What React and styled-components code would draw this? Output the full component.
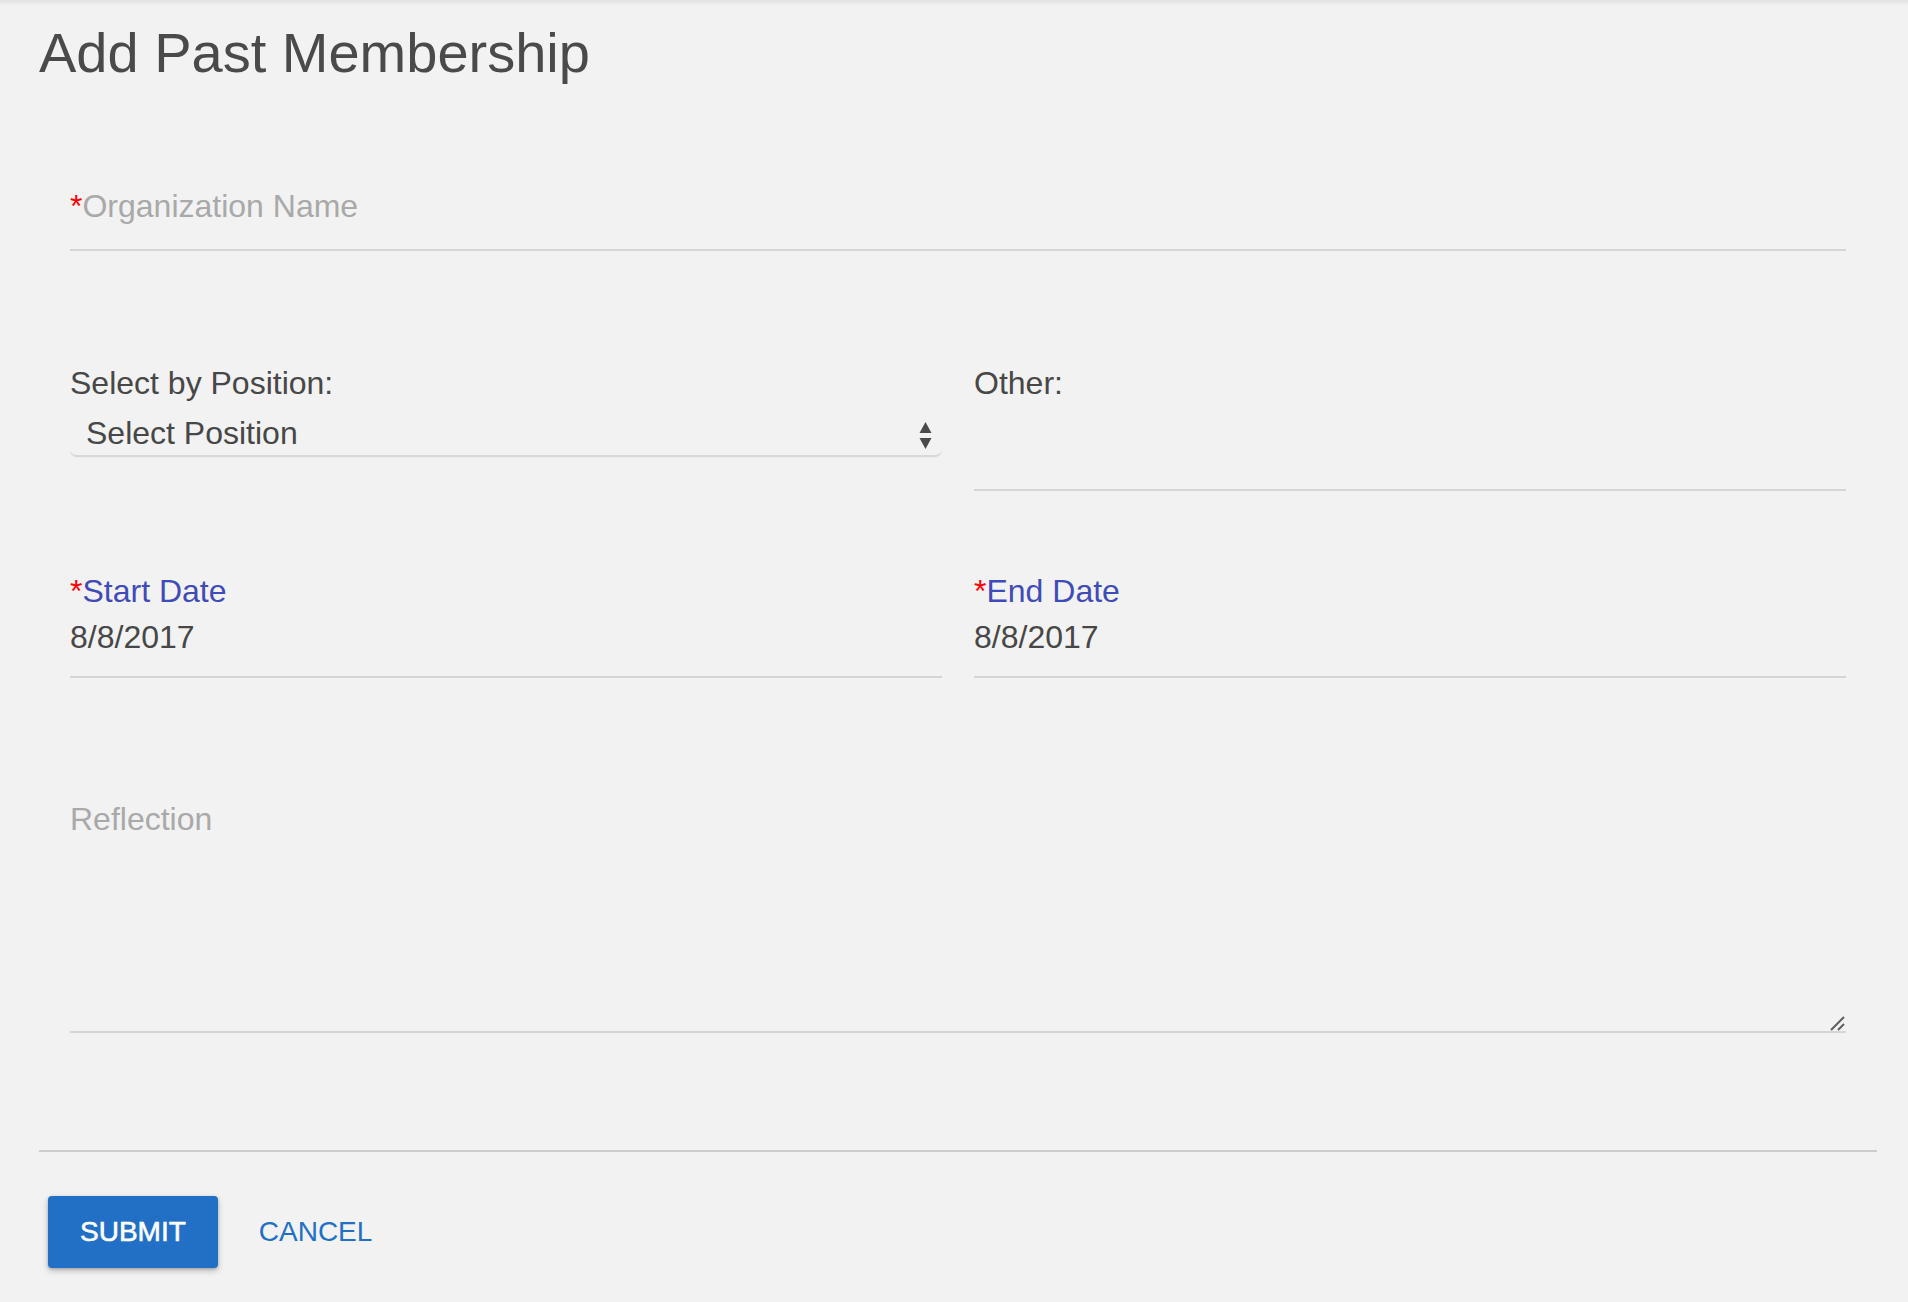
import React from "react";
import styled, { createGlobalStyle } from "styled-components";

const GlobalStyle = createGlobalStyle`
  html, body {
    margin: 0;
    padding: 0;
    background: #f2f2f2;
  }
  body {
    font-family: "Liberation Sans", Arial, Helvetica, sans-serif;
    color: #474747;
  }
  *, *::before, *::after {
    box-sizing: border-box;
  }
`;

const Page = styled.div`
  min-height: 1302px;
  padding: 0 31px 0 39px;
  display: flex;
  flex-direction: column;
  background: linear-gradient(#e2e2e2, #f2f2f2 6px) no-repeat top left / 100% 6px,
    #f2f2f2;
`;

const Title = styled.h1`
  margin: 21px 0 0;
  font-size: 56px;
  line-height: 64px;
  font-weight: 400;
  color: #4a4a4a;
`;

const Form = styled.form`
  display: flex;
  flex-direction: column;
  padding: 0 31px;
  margin: 0;
`;

const Block = styled.div`
  position: relative;
  margin-top: ${(p) => p.$top}px;
`;

const Row = styled.div`
  display: grid;
  grid-template-columns: 1fr 1fr;
  column-gap: 32px;
  align-items: start;
  margin-top: ${(p) => p.$top}px;
`;

const Column = styled.div`
  display: flex;
  flex-direction: column;
`;

const Label = styled.label`
  display: block;
  font-size: 32px;
  line-height: 40px;
  color: ${(p) => (p.$accent ? "#3f4bb8" : "#474747")};
`;

const FloatingLabel = styled.label`
  position: absolute;
  left: 0;
  top: 0;
  font-size: 32px;
  line-height: 48px;
  color: #a9a9a9;
  pointer-events: none;
`;

const Req = styled.span`
  color: #ff0000;
`;

const TextInput = styled.input`
  display: block;
  width: 100%;
  height: ${(p) => p.$height}px;
  padding: 0 0 ${(p) => p.$pad}px;
  margin: 0;
  border: none;
  border-bottom: 2px solid #d5d5d5;
  background: transparent;
  font-family: inherit;
  font-size: 32px;
  color: #474747;
  outline: none;
`;

const SelectWrap = styled.div`
  position: relative;
`;

const Select = styled.select`
  display: block;
  width: 100%;
  height: 54px;
  padding: 8px 48px 0 16px;
  margin: 0;
  line-height: 44px;
  border: none;
  border-bottom: 2px solid #d8d8d8;
  border-radius: 7px;
  box-shadow: 0 1px 1px rgba(0, 0, 0, 0.03);
  background: transparent;
  appearance: none;
  -webkit-appearance: none;
  font-family: inherit;
  font-size: 32px;
  color: #474747;
  outline: none;
`;

const Arrows = styled.svg`
  position: absolute;
  right: 10px;
  top: 19px;
  pointer-events: none;
`;

const TextArea = styled.textarea`
  display: block;
  width: 100%;
  height: 238px;
  padding: 0;
  margin: 0;
  border: none;
  border-bottom: 2px solid #d5d5d5;
  background: transparent;
  font-family: inherit;
  font-size: 32px;
  line-height: 48px;
  color: #474747;
  outline: none;
  resize: none;

  &::placeholder {
    color: #a9a9a9;
  }
`;

const ResizeHandle = styled.svg`
  position: absolute;
  right: 1px;
  bottom: 2px;
  pointer-events: none;
`;

const Divider = styled.hr`
  margin: 117px 0 0;
  border: none;
  height: 2px;
  background: #cccccc;
`;

const Actions = styled.div`
  display: flex;
  align-items: center;
  gap: 9px;
  margin-top: 44px;
  padding-left: 9px;
`;

const Button = styled.button`
  height: 72px;
  padding: 0 32px;
  border: none;
  border-radius: 4px;
  font-family: inherit;
  font-size: 28px;
  font-weight: 400;
  line-height: 72px;
  cursor: pointer;
  background: ${(p) => (p.$primary ? "#2170c6" : "transparent")};
  color: ${(p) => (p.$primary ? "#ffffff" : "#2170c6")};
  -webkit-text-stroke: ${(p) => (p.$primary ? "0.6px #ffffff" : "0")};
  box-shadow: ${(p) =>
    p.$primary
      ? "0 3px 6px rgba(0,0,0,0.22), 0 1px 3px rgba(0,0,0,0.18)"
      : "none"};
`;

export default function App() {
  return (
    <>
      <GlobalStyle />
      <Page>
        <Title>Add Past Membership</Title>
        <Form onSubmit={(e) => e.preventDefault()}>
          <Block $top={97}>
            <FloatingLabel htmlFor="org">
              <Req>*</Req>Organization Name
            </FloatingLabel>
            <TextInput id="org" type="text" $height={69} $pad={19} />
          </Block>

          <Row $top={112}>
            <Column>
              <Label htmlFor="position">Select by Position:</Label>
              <SelectWrap>
                <Select id="position" defaultValue="">
                  <option value="">Select Position</option>
                  <option value="president">President</option>
                  <option value="member">Member</option>
                </Select>
                <Arrows width="13" height="30" viewBox="0 0 13 30">
                  <path d="M6.5 0 L12.5 11 L0.5 11 Z" fill="#4a4a4a" />
                  <path d="M0.5 16 L12.5 16 L6.5 27 Z" fill="#4a4a4a" />
                </Arrows>
              </SelectWrap>
            </Column>
            <Column>
              <Label htmlFor="other">Other:</Label>
              <TextInput id="other" type="text" $height={88} $pad={0} />
            </Column>
          </Row>

          <Row $top={80}>
            <Column>
              <Label $accent htmlFor="start">
                <Req>*</Req>Start Date
              </Label>
              <TextInput
                id="start"
                type="text"
                defaultValue="8/8/2017"
                $height={67}
                $pad={13}
              />
            </Column>
            <Column>
              <Label $accent htmlFor="end">
                <Req>*</Req>End Date
              </Label>
              <TextInput
                id="end"
                type="text"
                defaultValue="8/8/2017"
                $height={67}
                $pad={13}
              />
            </Column>
          </Row>

          <Block $top={117}>
            <TextArea placeholder="Reflection" />
            <ResizeHandle width="16" height="16" viewBox="0 0 16 16">
              <path
                d="M2 15 L15 2 M9 15 L15 9"
                stroke="#5f5f5f"
                strokeWidth="2"
                strokeLinecap="butt"
                fill="none"
              />
            </ResizeHandle>
          </Block>
        </Form>

        <Divider />

        <Actions>
          <Button $primary type="button">
            SUBMIT
          </Button>
          <Button type="button">CANCEL</Button>
        </Actions>
      </Page>
    </>
  );
}
